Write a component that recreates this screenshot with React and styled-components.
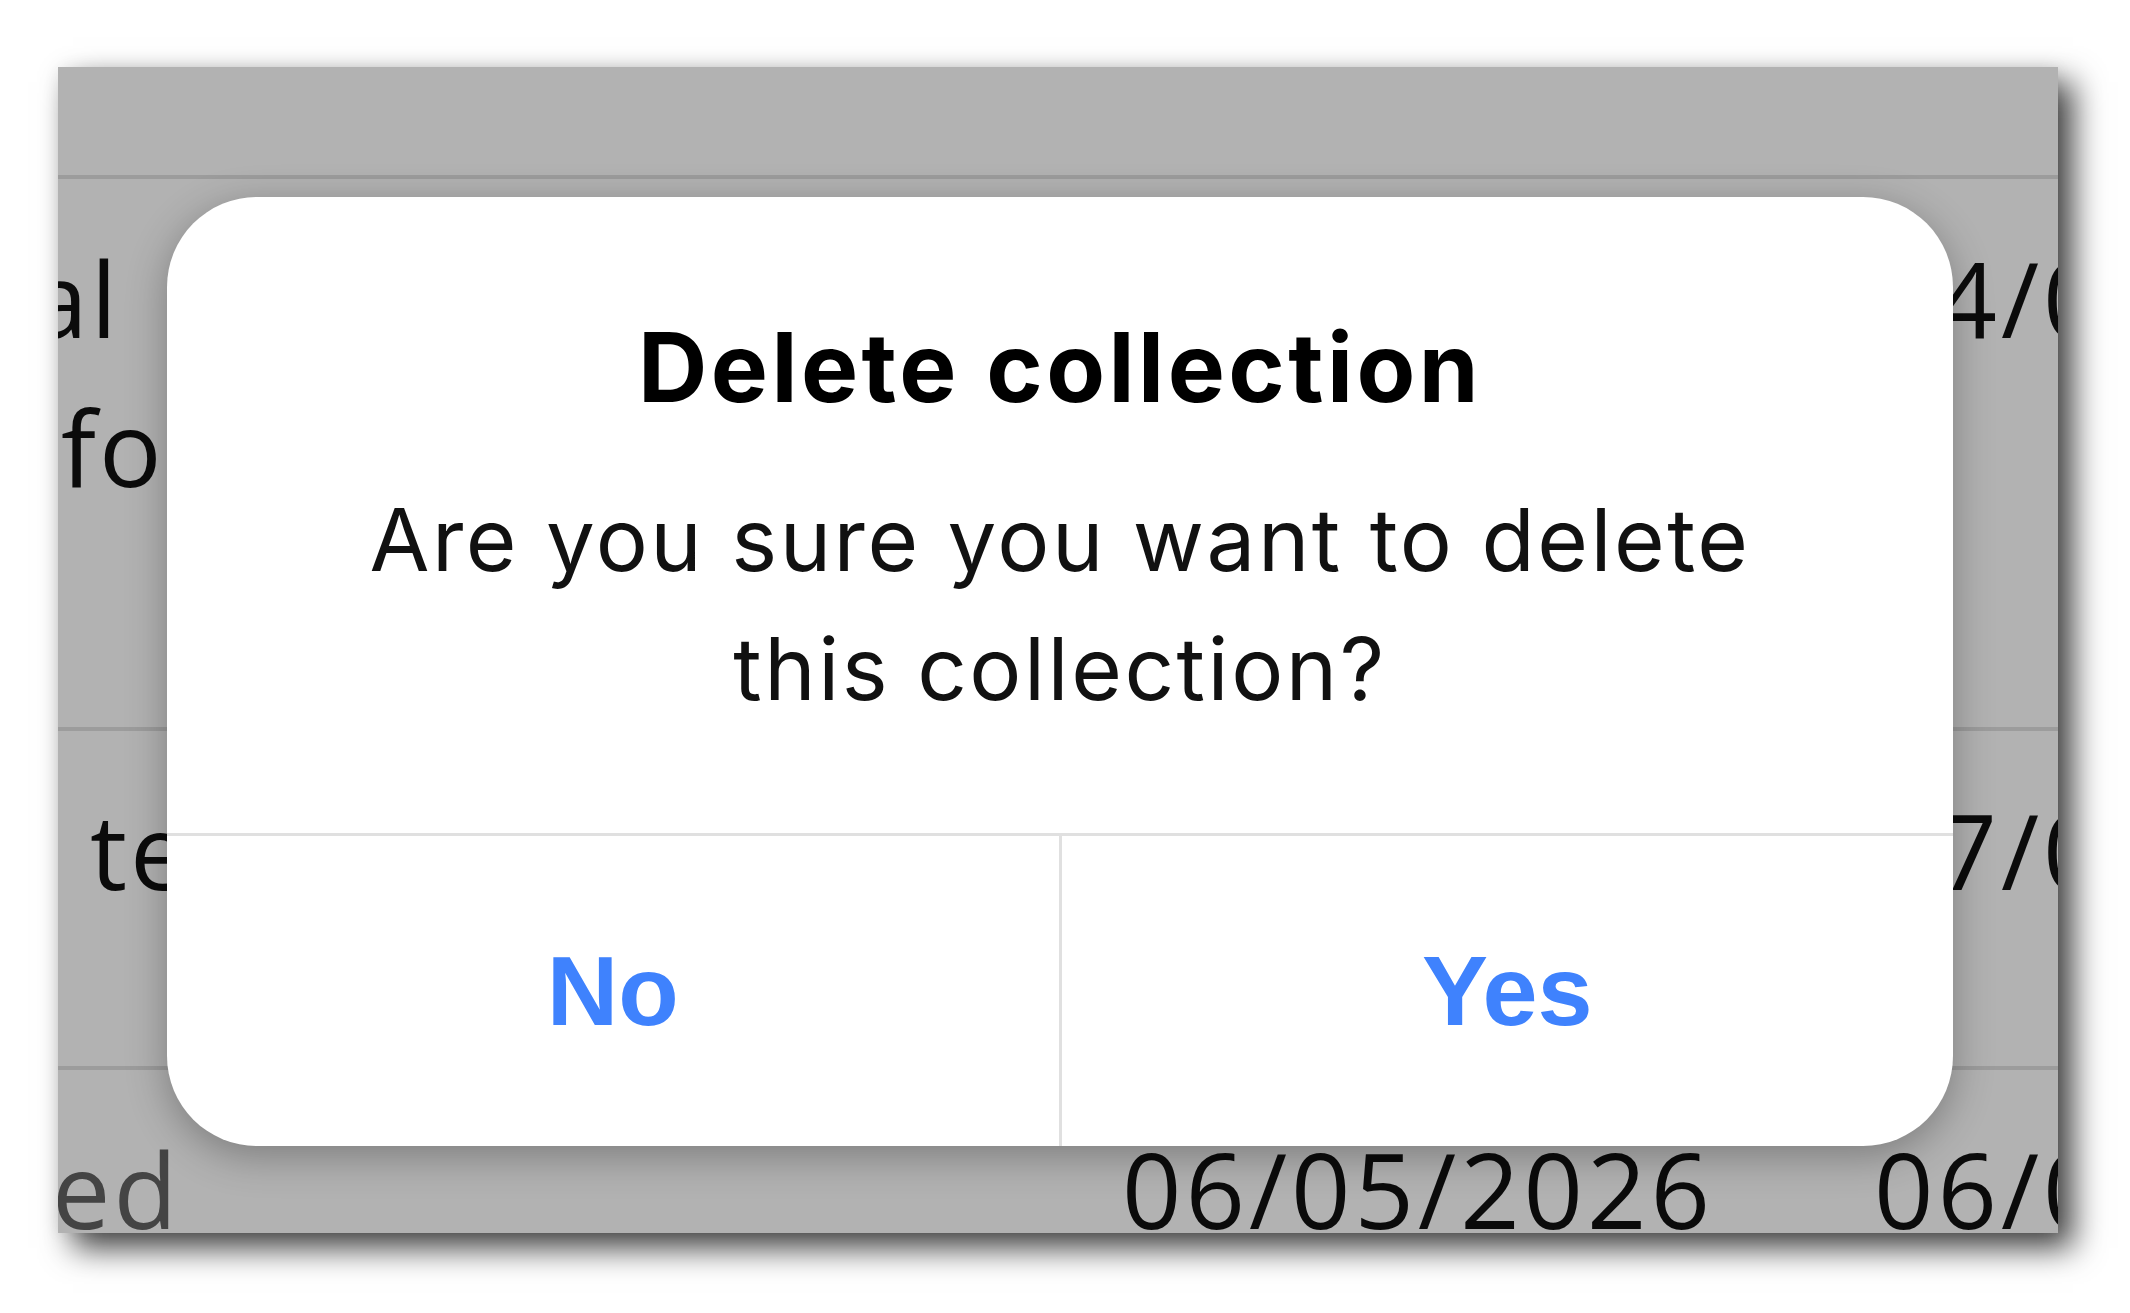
import React from "react";
import styled, { createGlobalStyle } from "styled-components";

const GlobalStyle = createGlobalStyle`
  html, body {
    margin: 0;
    padding: 0;
    background: #ffffff;
  }
  body {
    font-family: "Open Sans", "Noto Sans", sans-serif;
  }
  * {
    box-sizing: border-box;
  }
`;

const Stage = styled.div`
  width: 2130px;
  height: 1313px;
  padding: 67px 0 0 58px;
  overflow: hidden;
`;

const Screen = styled.section`
  position: relative;
  width: 2000px;
  height: 1166px;
  overflow: hidden;
  background: #ffffff;
  box-shadow: 15px 15px 30px rgba(0, 0, 0, 0.75), 0 0 16px rgba(0, 0, 0, 0.06);
`;

const Table = styled.div`
  display: flex;
  flex-direction: column;
`;

const HeaderRow = styled.div`
  height: 112px;
  border-bottom: 4px solid #e0e0e0;
`;

const Row = styled.div`
  display: flex;
  flex: none;
  height: ${(p) => p.$height}px;
  padding-top: 44px;
  border-bottom: 4px solid #e0e0e0;
  font-size: 104px;
  line-height: 149px;
  color: #111111;
`;

const NameCell = styled.div`
  flex: none;
  width: 1064px;
  display: flex;
  flex-direction: column;
`;

const NameLine = styled.span`
  display: block;
  white-space: nowrap;
  letter-spacing: 3px;
  margin-left: ${(p) => p.$shift}px;
  color: ${(p) => (p.$muted ? "#626262" : "#111111")};
`;

const DateCell = styled.div`
  flex: none;
  width: 752px;
  white-space: nowrap;
  letter-spacing: 4px;
`;

const Overlay = styled.div`
  position: absolute;
  inset: 0;
  background: rgba(0, 0, 0, 0.3);
  display: flex;
  justify-content: center;
  align-items: center;
  padding: 43px 0 0 4px;
`;

const Dialog = styled.div`
  width: 1786px;
  background: #ffffff;
  border-radius: 90px;
  overflow: hidden;
  box-shadow: 0 10px 40px rgba(0, 0, 0, 0.3);
  display: flex;
  flex-direction: column;
`;

const DialogBody = styled.div`
  padding: 113px 60px 100px;
  display: flex;
  flex-direction: column;
  align-items: center;
  gap: 50px;
  text-align: center;
  font-family: Inter, "Noto Sans", sans-serif;
`;

const Title = styled.h2`
  margin: 0;
  font-weight: 700;
  font-size: 96px;
  line-height: 115px;
  letter-spacing: 3.5px;
  color: #000000;
`;

const Message = styled.p`
  margin: 0;
  font-weight: 400;
  font-size: 87px;
  line-height: 129px;
  letter-spacing: 2.5px;
  color: #111111;
`;

const Actions = styled.div`
  display: flex;
  height: 313px;
  border-top: 3px solid #e0e0e0;
`;

const ActionButton = styled.button`
  flex: 1;
  padding: 0;
  border: none;
  border-left: ${(p) => (p.$divided ? "3px solid #e0e0e0" : "none")};
  background: transparent;
  font-family: "Liberation Sans", Arial, sans-serif;
  font-weight: 700;
  font-size: 99px;
  color: #3f82fd;
  cursor: pointer;
`;

const rows = [
  {
    height: 552,
    lines: [
      { text: "al", shift: -28 },
      { text: "fo", shift: 3 },
    ],
    dates: ["04/06/2026", "04/06/2026"],
  },
  {
    height: 339,
    lines: [{ text: "te", shift: 32 }],
    dates: ["07/06/2026", "07/06/2026"],
  },
  {
    height: 400,
    lines: [{ text: "ed", shift: -6, muted: true }],
    dates: ["06/05/2026", "06/05/2026"],
  },
];

const App = () => {
  return (
    <Stage>
      <GlobalStyle />
      <Screen>
        <Table>
          <HeaderRow />
          {rows.map((row, i) => (
            <Row key={i} $height={row.height}>
              <NameCell>
                {row.lines.map((line, j) => (
                  <NameLine key={j} $shift={line.shift} $muted={line.muted}>
                    {line.text}
                  </NameLine>
                ))}
              </NameCell>
              {row.dates.map((d, j) => (
                <DateCell key={j}>{d}</DateCell>
              ))}
            </Row>
          ))}
        </Table>

        <Overlay>
          <Dialog>
            <DialogBody>
              <Title>Delete collection</Title>
              <Message>
                Are you sure you want to delete
                <br />
                this collection?
              </Message>
            </DialogBody>
            <Actions>
              <ActionButton>No</ActionButton>
              <ActionButton $divided>Yes</ActionButton>
            </Actions>
          </Dialog>
        </Overlay>
      </Screen>
    </Stage>
  );
};

export default App;
